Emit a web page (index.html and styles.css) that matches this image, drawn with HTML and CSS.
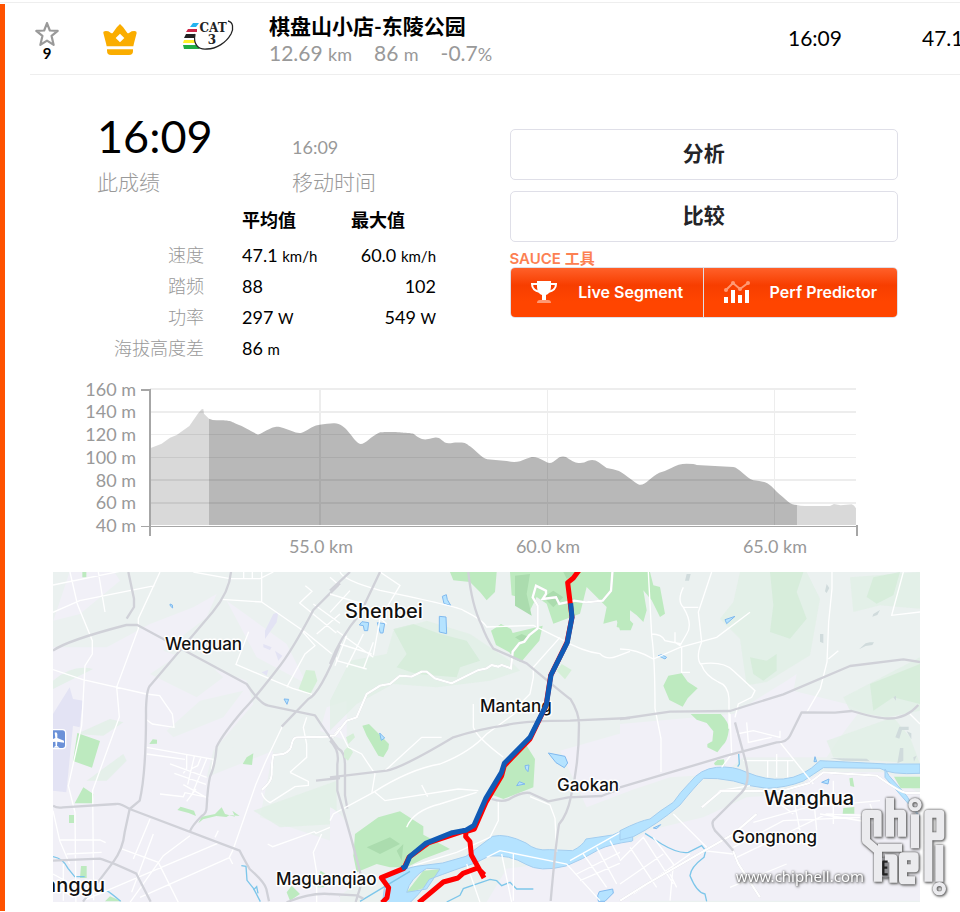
FILE: index.html
```html
<!DOCTYPE html>
<html lang="zh-CN">
<head>
    <meta charset="UTF-8">
    <meta name="viewport" content="width=device-width, initial-scale=1.0">
    <title>棋盘山小店-东陵公园</title>
    <link rel="stylesheet" href="styles.css">
</head>
<body>
    <main class="page">
        <section class="segment">
            <header class="row">
                <div class="star">
                    <svg width="24" height="24" viewBox="1 1 22 22" fill="none" stroke="#999" stroke-width="2" stroke-linejoin="round"><path d="M12 2l2.600 6.800 7.200.4-5.600 4.600 1.900 8.200L12 18l-6.100 4 1.900-8.200L2.200 9.200l7.200-.4z"/></svg>
                    <span>9</span>
                </div>
                <svg class="crown" width="34" height="31" viewBox="0 0 102 93" fill="#faad00">
                    <path fill-rule="evenodd" d="M51 0l9 9 13 18q2 2 5 0l8-5q16-4 15 5l-8 31-2 9H11l-2-9L1 27q-1-8 15-5l8 5q3 2 5 0L42 9zM51 29L38 42l13 13 13-13z"/>
                    <path d="M12 76h78v4q0 13-12 13H24Q12 93 12 80z"/>
                </svg>
                <svg class="cat" width="52" height="32" viewBox="0 0 52 32">
                    <path fill="#25b4ef" d="M11 4h6l-3 4H8z"/>
                    <path fill="#cc2748" d="M6 10h9v3H4z"/>
                    <path fill="#222" d="M4 15h11l-1 4H2z"/>
                    <path fill="#fff02a" d="M2 21h11v3H1z"/>
                    <path fill="#20ac43" d="M1 26h13l4 4H2z"/>
                    <path fill="#fff" stroke="#222" stroke-width="1.300" d="M46 2c5 1 6 7 3 13-5 9-15 15-24 15-9 1-14-5-12-15"/>
                    <text class="cat-text" x="31" y="13">CAT</text>
                    <text class="cat-text" x="30" y="25">3</text>
                </svg>
                <div class="title">
                    <h1>棋盘山小店-东陵公园</h1>
                    <p><span>12.69 <small>km</small></span><span>86 <small>m</small></span><span>-0.7<small>%</small></span></p>
                </div>
                <div class="num">16:09</div>
                <div class="num">47.1</div>
            </header>

            <div class="detail">
                <div class="stats">
                    <div class="times">
                        <div><strong>16:09</strong><span>此成绩</span></div>
                        <div><b>16:09</b><span>移动时间</span></div>
                    </div>
                    <table>
                        <thead>
                            <tr><td></td><th scope="col">平均值</th><th scope="col">最大值</th></tr>
                        </thead>
                        <tbody>
                            <tr><th scope="row">速度</th><td>47.1 <small>km/h</small></td><td>60.0 <small>km/h</small></td></tr>
                            <tr><th scope="row">踏频</th><td>88</td><td>102</td></tr>
                            <tr><th scope="row">功率</th><td>297 <small>W</small></td><td>549 <small>W</small></td></tr>
                            <tr><th scope="row">海拔高度差</th><td>86 <small>m</small></td><td></td></tr>
                        </tbody>
                    </table>
                </div>
                <div class="actions">
                    <button class="btn" type="button">分析</button>
                    <button class="btn" type="button">比较</button>
                    <div class="sauce">SAUCE 工具</div>
                    <div class="group">
                        <button type="button">
                            <svg width="26" height="22" viewBox="0 0 26 22" fill="none">
                                <path fill="#fff" d="M6 0h14v5c0 5-2 8-5 9v5h-4v-5c-3-1-5-4-5-9z"/>
                                <path stroke="#fff" stroke-width="2" d="M7 3H1c0 4 3 7 8 8M19 3h6c0 4-3 7-8 8"/>
                                <path fill="#ff9973" d="M6 22c0-2 1-3 3-3h8c2 0 3 1 3 3z"/>
                            </svg>
                            <span>Live Segment</span>
                        </button>
                        <button type="button">
                            <svg width="26" height="22" viewBox="0 0 26 22">
                                <path fill="none" stroke="#ff9973" stroke-width="2" d="M2 9l7-7 7 6 8-6"/>
                                <g fill="#ff9973"><circle cx="2" cy="9" r="2"/><circle cx="9" cy="2" r="2"/><circle cx="16" cy="8" r="2"/><circle cx="24" cy="2" r="2"/></g>
                                <path fill="#fff" d="M0 16h4v6H0zM7 9h4v13H7zM14 14h4v8h-4zM21 9h4v13h-4z"/>
                            </svg>
                            <span>Perf Predictor</span>
                        </button>
                    </div>
                </div>
            </div>

            <svg class="chart" viewBox="0 0 790 190">
                <g stroke="#ededed" stroke-width="2">
                    <path d="M80 20h706M80 43h706M80 111h706M80 134h706M250 20v136"/>
                    <path stroke-width="1" d="M80 65.500h706M80 88.500h706M477.500 20v136M704.500 20v136"/>
                </g>
                <g transform="scale(.33333)" fill="#000">
                    <path fill-opacity=".15" d="M240 468V238L275 224 300 206 320 198 358 171 385 132 395 121 400 120 402 134 417 149V468z"/>
                    <path fill-opacity=".28" d="M417 468V149Q428 154 440 154C485 154 480 157 500 165S530 178 550 190 565 196 590 184 620 171 640 177 680 195 695 191 725 171 745 168 780 164 790 163C825 159 845 208 866 223 880 233 900 203 927 191 935 188 990 189 1000 191 1040 192 1030 196 1045 205S1070 212 1085 208 1105 205 1115 213 1130 226 1150 221C1190 219 1185 222 1200 232S1235 268 1252 271L1310 276Q1330 281 1350 277 1370 268 1385 264 1400 262 1425 277 1438 286 1450 278L1468 265Q1478 260 1488 264 1510 280 1525 282 1540 284 1554 275 1573 270 1585 279L1610 297Q1630 300 1647 306C1670 318 1697 345 1708 347 1724 351 1745 322 1768 311Q1785 307 1804 297 1825 284 1850 284T1880 288L1990 294C2005 295 2030 328 2050 334Q2080 337 2092 343C2110 354 2120 371 2135 381 2155 398 2160 407 2181 408V468z"/>
                    <path fill-opacity=".15" d="M2181 468V408Q2190 411 2205 411L2280 411 2292 405 2312 409 2345 406Q2352 407 2358 418V468z"/>
                </g>
                <g fill="none" stroke="#a6a6a6">
                    <path stroke-width="2" d="M71 21h9v146M786 157h1v10"/>
                    <path d="M71 157.500h716"/>
                </g>
                <g class="y-axis">
                    <text x="66" y="27">160 m</text>
                    <text x="66" y="49">140 m</text>
                    <text x="66" y="72">120 m</text>
                    <text x="66" y="95">100 m</text>
                    <text x="66" y="118">80 m</text>
                    <text x="66" y="140">60 m</text>
                    <text x="66" y="163">40 m</text>
                </g>
                <g class="x-axis">
                    <text x="251" y="184">55.0 km</text>
                    <text x="478" y="184">60.0 km</text>
                    <text x="705" y="184">65.0 km</text>
                </g>
            </svg>

            <div class="map">
                <svg class="tiles" viewBox="0 0 867 330">
                    <rect width="867" height="330" fill="#ebf1f0"/>
                    <!-- west -->
                    <g transform="translate(-13 -8) scale(.33333)">
                        <path class="town" d="M39 250L200 250 330 180 460 130 530 90 500 160 370 260 620 350 640 420 520 560 500 640 700 560 660 760 900 840V1020H39z"/>
                        <path class="town" d="M90 20h130l20 30-120 100-80 20zM560 110l180 130 60 120-150-80zM860 430l60-20v120l-80-30z"/>
                        <path class="hill" d="M39 350q60-50 120-35l-120 60zM110 510l100-45 40 10-60 40zM140 650l110-80 10 20-60 60zM640 740l250-90v130L720 790z"/>
                        <path fill="#ebf1f0" d="M380 500l100-90 130-30-60 80-150 60zM540 540l130-130 100 60-160 90zM330 330l120-80 100 90-80 60z"/>
                        <path class="field" d="M39 450l50-80 10 35 30 5-10 80-20-5-20 200-40-5zM700 150l15-5-5 30-35 50V200zM670 240l25 10-5 8-20-8zM705 260l22 15-12 15zM665 325l20-8-5 18z"/>
                        <path class="wood" d="M112 507l68 24-24 80-57-20zM130 670l30 20-2 28h-54zM87 753h15v24H87zM123 906h17v36h-20zM328 540l10-14 13 1v12zM608 600l12-20 20-12-4 35zM412 738l10-10 40 12 6 16-22-9zM475 778l10-20 40-8 20-20 10 20 30 8-8-18 22 16-30-3-10 6-30-3-40 10zM127 20h12v20h-12zM195 1012l15-15 35 15zM740 985l15-20 25 25-30 20zM832 945l10-25 15 10-5 40h-20z"/>
                        <path class="wood pale" d="M776 375l22-57 26 2 8 30-22 42z"/>
                        <path class="water" d="M390 120l7 3 1 9-7-6zM732 405l14 1-5 15z"/>
                        <path class="stream" stroke-width="6" d="M39 878q30 5 45 35l20 25h30M200 980q10 5 42 32M604 905l14 2 3 42 20 25 20 39M640 978l10-10 4 20"/>
                        <path class="street" d="M39 63l230-47M90 24l22 96 45 110v40l-22 35-10 180-40 180 20 80 3 300M39 145l80-35 225-45M175 24l20 120M360 24l-65 140v30l-65 175 8 90-80 220 3 330M39 317l90 30 190 43 40 5 38 55 5 40-65-10-20-15M460 24l110 20h90l40-20M665 24v90l-120-8M611 24v20M637 24v20M665 114l130 90 80 65M870 40l30 26M796 65l20 17-37 35 110 90M785 200l40 45-30 25-55 100M626 203l-38 98 105 45 65 27 58 18M900 150l-70 60M820 120l80 58M890 280v12M320 550l200 36-5 30M320 570l115 16M440 573v40l-10 15M463 577l-20 85M483 580l-10 25-20 10M500 584l-45 110M390 600l110 40M403 628l95 33M430 662l75 42M360 690l70 8 5-12 70 15M468 675l-28 37M800 460l-10 30 10 50v40l-50 45M750 625l55 27v12l-40 4-75 48q-20-10-25-30M728 485l-50 105-30 70-70 200-10 20 10 20M683 840l15 8 125-45 5 5 70-30M845 810l-25 55 10 60v90M60 828h120l17 8M80 870l105-5M525 820l10-20M130 1010l410-175M300 1000l270-120M340 810l-65 175M330 765l-50 120M450 815l-80 60-100 140M245 855l110 40 60 120M39 930l110 60M39 960l60 40M70 900v110M39 740l20 90 30 70"/>
                        <path class="river-road" d="M900 490l-20 28-110 2q-10 0-15 20 0 20-25 30l-30 3q-5 20-5 60 0 20-30 45"/>
                        <path class="road" d="M265 24l17 80v25l-22 35M39 260q40-30 220-77h33l328 177q40 60 65 65l140 29q40 60 70 100 20 10 20 50v90l7 40M573 24q-5 60-55 120L330 365q-10 10-12 70 1 190-19 275l-30 25-15 70q-5 50-35 90l-90 118M900 58l-80 80q-65 125-110 180-70 90-100 120-60 70-80 110-5 60-20 90-7 30-10 90 0 20-15 28-30 30-36 48M39 725q10 8 30 5l160-10q10-3 40 15l330 125q10 20 30 55 45 40 50 60l8 37M39 890l140-6q30 8 110 45l43 84M900 240q-60 150-95 165l-80 83M828 650l72-8M740 1015q90-38 160-20"/>
                        <rect x="19" y="497" width="58" height="57" rx="10" fill="#6b91d8" stroke="#fff" stroke-width="4"/>
                        <path fill="#fff" d="M44 506q6-4 8 4v12l20 8v6l-20-3-1 12 8 6H39l8-6-1-12-20 3v-6l20-8z"/>
                    </g>
                    <!-- centre -->
                    <g transform="translate(277 -8) scale(.33333)">
                        <path class="town" d="M0 730q50 20 80 120l20 90-100 80zM470 1014l60-100 160-20 210-90v210zM690 560l210-60v180l-130 50z"/>
                        <path class="hill" d="M190 200l100-30 130 40 120 80 30 30-90 30-160 20-130-10-110 60-80 80v-90l60-120 110-20z"/>
                        <path class="hill strong" d="M190 195l60-15 80 30 80 20 40 60-60 20-10 30-120-10-60-20 30-40z"/>
                        <path class="wood" d="M360 24h140l-5 60-25 25-20-25-30-30-50-5zM540 24h290l70 60v105l-30 10-10-30-40 10 10-50-60-60-20 80-80 30-20-60-30-20-25 50-30-50-20-5zM483 200l30-20 30 15 5 12 90-22-10 45-30 35-25 30-20-10-15-20-40-22zM830 24h70v150l-20 20-20-5 5-35-20-20-35-60 10-20zM97 485l20-5 60 60-2 15-15 25-15-5-35-60zM590 545l25 40-5 85-90 35-40-15 40-90 70-65zM75 810l70-50 65-18 70 45v25l80 43-80 30-50 25h-50l-40-10-60 25-10-50zM230 985l50-65 55-5-45 55-60 18z"/>
                        <path fill="#abdcae" d="M555 35l45-5-10 60 15 65-50-30zM640 100l30-20 30 20-30 30zM700 24h50l-40 20zM110 850l70-30 30 20-60 30zM200 860l20-20-5 50zM555 220l20-10 20 8-20 15z"/>
                        <path class="wood pale" d="M680 320l15-20 30 18-20 28zM48 520l22-12 5 12-20 20zM42 560l15-15 12 20-15 25-12-10z"/>
                        <path class="water" d="M88 183l8-10 20 3-3 24h-10l-3-15zM142 176l22 3-5 28h-8zM337 97l12-5 3 15 10 17-20-5zM328 157l20 2 2 50-22-5zM149 507l15 15-10 7zM655 567l50 10 8 20-10 14-25-15zM585 605l12-2-3 20-7-8zM560 665l8-12 17 7zM803 995l5-12 40-8 2 12-25 25h-20z"/>
                        <path class="river" d="M158 1014l10-85 90-22 80-10 70-20 80-60q40-10 100 20 30 25 70 20l70 3q30-15 40-35l80-12 60-27v45q-70 10-100 25-50 30-100 50-80 20-120-5-50-30-110-25l-40 20q-60 20-140 50-30 50-80 88zM230 985l60-10 40-60-40-2q-50 30-60 72z" fill-rule="evenodd"/>
                        <path class="stream" d="M90 1012l150-90M350 1014l40-20 10-20 80-28 20 4 15 15 25-10 20 20h50"/>
                        <path class="street" d="M30 24q10 25 120 55 240 50 250 60 60 30 70 50l140-5 80 40q70 40 120 45 20 20 50 8l40-15M150 24l60 40-60 100-20 110M0 145l60-65M0 90l100 30 70 60M20 200l110 80M30 240l95 30M20 290l90 25M50 215l-35 90M100 210l-50 100M130 235l-30 80M0 770l10-20 120-65q110-70 200-85 90-35 140-90l110-80M430 420v70q10 30 90 90M690 220l-80 90v30l-10 50-60 60M135 685l30 25 220-35 60 5M275 663l18 35M30 500l25 50 40 20 40 60-10 60M230 790q20-50 100-70l110-35M505 710v60l-25 50-100 45-130 40M165 620l110-100h60M600 698l60 25 15 40 5 100M550 870v140M470 880l40-20 200 40 100 110M410 900l40 115M515 870l30 145M720 890l160-90M740 930l160-80M750 950l160-70M760 870l70 100M800 850l60 110M840 830l60 110"/>
                        <path class="river-road" d="M0 515h15l35-45 30-10 30-70 40-25 30-5 30-25 35 3 30-15h15l25 20 50 15 80-40 25-5 15-10 20 5 10-5 28 10 5-50 20-25 15-5 15-20 25-20V125l-15-25 10-35 10 5 20 10v10l-10 15 40-5 10 20 45-10 35 5 50-5 25-30 5-65"/>
                        <path class="road" d="M150 24L90 150Q30 220 0 300M60 24L0 80M415 24q10 100 40 160 15 40 35 70l100 44q120 100 132 108 25 40 25 75 0 120-25 220-10 50-35 80-10 60-25 230M0 640l170-20q50-10 200-100 80-25 150-35 60-15 200-15l180-8M485 705q30 10 50 2 40-25 65-20l55 25 60-12 100-4 85-33M0 530q30 30 22 70v80q45 150 75 270l-20 64M0 990l80 4 20 10"/>
                    </g>
                    <!-- east -->
                    <g transform="translate(567 -8) scale(.33333)">
                        <path class="town" d="M0 480l340-30 160-100 30-20-10 50 160 40 40 20-60 80-40 60H370l-60 50-160 10L0 690zM0 860l80-60 170-40 130-60 120-10 100-65h200l100 65v320H0z"/>
                        <path class="hill" d="M360 24h200l40 80-30 170-130 80-60 10-20-140-60-60 40-50zM690 40l210-16v110l-120-10-80 20zM670 400l230-120v160l-100 20-110-20zM620 530l200-70 50 60 30 80-260-20z"/>
                        <path class="hill strong" d="M450 24h100l-20 60 30 80-50 60-60-20 10-80zM760 40l80-16-20 70-50 25-30-20zM750 360l150-60v120l-80-20-60 40zM390 280l50 10 30-20v50l-40 30-30-20z"/>
                        <path class="wood" d="M0 24h90l10 40 20 5 15 80-15 10-25-50-25-30 10 60-10 35-20-20-20-15-15 15 25 25-8 20H0zM130 365l15-30 40-7 18 25 30 20-30 30-15 25-40-20zM212 450h90q25 25 25 45-5 40-20 50l-15 20-30-15v-10l15-8 3-30-20-25-30-10zM282 598l10-10 20-2 3 18h-30zM822 638h80v35h-60zM688 643l10-2 5 28-12-3zM670 732l33-3v20h-35z"/>
                        <path fill="#d0dbdc" d="M200 30h12l-5 20h-12zM620 60l8 12-8 15-5-5zM750 235h12l-5 8-20 3-20 10 20-18zM760 150l20-12-8 15-15 5zM820 400l8-5v15zM826 520l12-32h28v10h-20l-8 26zM860 502l14 6v18l-8-14zM840 552h10v38l-18 8zM880 580l10-5-8 18zM630 582l110 2 10 8-80-2zM600 210h10v28l-10-5z"/>
                        <path class="water" d="M315 167l30-10-25 22zM115 275l10-3 15 8-5 5zM605 655l22-10-3 15zM585 578l5 15h-8zM100 792l22-10-12 12z"/>
                        <path class="river" d="M0 800q60-30 90-35 30-25 70-50 20-30 50-60 30-40 80-45 50-5 90 15 60 25 110 20 60-5 110-55l200 10h100v28q-90 5-120-15l-170-2q-30 20-60 40-50 20-110 22-50-5-100-22-50-10-90-8-30 30-70 80-70 60-140 95L0 828z"/>
                        <path class="river" d="M795 615l12 20 53 60 40 65-30-35-75-85z"/>
                        <path class="stream" stroke-width="6" d="M75 808l50 32q50 30 80 25l40-20 12 15-5 20q-40 30-42 55 20 50 45 55l5 22M356 570l2 30-5 8"/>
                        <path class="street" d="M85 24l10 190q10 70 10 220l18 90v100M275 24l-40 120 10 90q-20 50 0 70 10 30 50 50 30 10 32 50v90M190 70q-20 40 0 60 30 50 10 80l-20 35-15-10v-30M0 255q50 0 100 30l80-35 110-30 100-75M190 130h45M95 210q30 0 40 20l50 10M185 250v75h25M240 300q70-10 100 20l65 60-10 20-40 20-10 40M636 24v50l-10 100-5 120-20 80-40 70M625 285l30-25M850 24l-35 130 85-10M330 450l5 120-30 40M350 510l50-10 80 20v-20M380 475l5 60 70-15M480 535l40 50 60 75M370 590h150M443 590v50M470 570v70M503 590v50M250 730l50-50 90-15M160 750l100 100M0 890l70-70 90 140M30 850l80 120M0 960l130-90M40 990l170-120M100 820l60 80-10 110M400 775l160-45 220-20M350 880l270-130 140 5M520 700l20 100M580 690l10 110M640 650v130M340 850l150-80 230-10M250 860l90 10M870 450l30 30M750 720l30 80M440 690l80 60M600 750l180 30M150 930l20 40M330 970l170-70"/>
                        <path class="river-road" d="M0 1010L80 960 340 810 410 750M570 655l40-30 160 10q70 50 90 52h40M300 680l180 2 90-25M335 850l20 50 65 100M245 730l60-50"/>
                        <path class="road" d="M0 465l150-22 180-2 160-50 200-85 160-20 50 8M0 670l320-95 150-40q30 0 40-20l35-70 100 1 50-5q70 20 100 22 60 5 100-40M345 475l30 110q20 70-10 100l-80 80q-15 10 0 35 30 30 55 60"/>
                    </g>
                    <g class="places">
                        <text x="112" y="78">Wenguan</text>
                        <text x="427" y="140">Mantang</text>
                        <text x="504" y="219">Gaokan</text>
                        <text x="679" y="271">Gongnong</text>
                        <text x="223" y="313">Maguanqiao</text>
                        <text class="city" x="292" y="46">Shenbei</text>
                        <text class="city" x="711" y="233">Wanghua</text>
                        <text class="city end" x="52" y="320">Tanggu</text>
                    </g>
                    <g class="route" transform="translate(277 -8) scale(.33333)">
                        <path stroke="#f00" d="M750 15l-20 27-17 14 8 64 5 40-15 75-49 100-14 90-48 100-77 80-8 30-47 80-35 80-25 8-1 15 13 15 4 40 25 45 13 24M463 932l-20-20-44 16-15 14-44 12-74 62M405 800l-110 37-58 43-15 33-68 28 22 30-5 30-15 15"/>
                        <path stroke="#105ab5" d="M722 118l4 42-14 75-49 98-14 90-49 97-77 78-9 28-47 78-35 80-25 15-40 7-80 32-48 40-13 30-11 5"/>
                    </g>
                </svg>
                <div class="mark">
                    <span>www.chiphell.com</span>
                    <svg width="88" height="104" viewBox="720 692 264 312" fill="none" stroke="#ebebee" stroke-width="24" stroke-linejoin="round">
                        <circle cx="797" cy="910" r="31" fill="#8c8c90" stroke="none"/>
                        <path d="M773 817v-68h-35v80l37 32M810 700v117M810 748h36v69M885 750v102M774 952V850M774 850h72M795 882h25v73M925 952V748h36v68h-28M885 948h-36v-72h35v36h-28M958 842v110"/>
                        <circle cx="885" cy="721" r="14" stroke-width="12"/>
                        <circle cx="958" cy="973" r="14" stroke-width="12"/>
                        <path stroke="#222" stroke-width="7" d="M803 892h-13v38h13M790 910h12"/>
                    </svg>
                </div>
            </div>
        </section>
    </main>
</body>
</html>
```

FILE: styles.css
```css
* {
    box-sizing: border-box;
    margin: 0;
    padding: 0;
}

body {
    font-family: Lato, "Noto Sans CJK SC", sans-serif;
    background: #fff;
    color: #000;
    overflow-x: hidden;
}

button {
    cursor: pointer;
    font-family: Inter, "Noto Sans CJK SC", sans-serif;
}

.page {
    margin-top: 2px;
    padding-top: 1px;
    border-top: 1px solid #eee;
}

.segment {
    border-left: 5px solid #ff5200;
    padding-bottom: 9px;
}

.row {
    display: grid;
    grid-template-columns: 34px 112px 64px 1fr 134px 38px;
    align-items: center;
    justify-items: center;
    height: 71px;
    margin-left: 25px;
    border-bottom: 1px solid #eee;
}

.star {
    display: flex;
    flex-direction: column;
    align-items: center;
    padding-top: 4px;
    font-size: 15px;
    font-weight: bold;
    line-height: 15px;
}

.cat {
    align-self: start;
    margin-top: 15px;
}

.cat-text {
    font-family: "DejaVu Serif", serif;
    font-size: 12px;
    font-weight: bold;
    text-anchor: middle;
    fill: #222;
}

.title {
    justify-self: start;
    padding-left: 29px;
}

.title h1 {
    font-size: 21px;
    line-height: 28px;
    white-space: nowrap;
}

.title p {
    display: flex;
    gap: 22px;
    font-size: 21px;
    line-height: 26px;
    color: #999;
}

.title small {
    font-size: 18px;
}

.num {
    justify-self: start;
    padding-bottom: 4px;
    font-size: 21px;
    white-space: nowrap;
}

.detail {
    display: grid;
    grid-template-columns: 103fr 97fr;
    padding: 36px 62px 0 92px;
}

.times {
    display: flex;
    align-items: flex-end;
}

.times div {
    display: flex;
    flex-direction: column;
    flex: 0 0 195px;
}

.times strong {
    font-size: 45px;
    font-weight: normal;
    line-height: 50px;
}

.times b {
    font-size: 18px;
    font-weight: normal;
    line-height: 28px;
    color: #999;
}

.times span {
    font-size: 21px;
    font-weight: 300;
    line-height: 42px;
    color: #999;
}

table {
    width: 339px;
    border-collapse: collapse;
    font-size: 18px;
    line-height: 24px;
}

table small {
    font-size: 15px;
    line-height: 15px;
}

tr {
    height: 31px;
}

thead tr {
    height: 36px;
    vertical-align: top;
}

thead th {
    padding-top: 5px;
    text-align: left;
}

thead td {
    width: 145px;
}

tbody th {
    padding-right: 38px;
    font-weight: 300;
    text-align: right;
    color: #999;
}

tbody td:last-child {
    width: 85px;
    text-align: right;
}

.actions {
    padding-top: 18px;
}

.btn {
    display: block;
    width: 100%;
    height: 51px;
    margin-bottom: 11px;
    padding-bottom: 6px;
    border: 1px solid #dfdfe8;
    border-radius: 5px;
    background: #fff;
    color: #242428;
    font-size: 21px;
    font-weight: bold;
}

.sauce {
    margin-top: -3px;
    font-family: Inter, "Noto Sans CJK SC", sans-serif;
    font-size: 15px;
    font-weight: 600;
    line-height: 17px;
    color: #fc8052;
}

.group {
    display: flex;
    border: 1px solid #dfdfe8;
    border-radius: 5px;
    overflow: hidden;
}

.group button {
    display: flex;
    flex: 1;
    align-items: center;
    height: 49px;
    padding: 0 20px 2px;
    border: 0;
    background: linear-gradient(#ff6029, #f73e00 35%, #ff4500 70%);
    color: #fff;
    font-size: 16px;
    font-weight: 600;
    white-space: nowrap;
}

.group button + button {
    border-left: 1px solid #dfdfe8;
}

.group span {
    flex: 1;
    text-align: right;
}

.chart {
    display: block;
    width: calc(100% - 165px);
    margin: 6px 100px 0 65px;
    font-size: 18px;
    fill: #999;
}

.y-axis {
    text-anchor: end;
}

.x-axis {
    text-anchor: middle;
}

.map {
    position: relative;
    margin: 13px 40px 0 48px;
}

.tiles {
    display: block;
    width: 100%;
    overflow: hidden;
}

.town {
    fill: #f1f0f7;
}

.hill {
    fill: #e0efe4;
    opacity: 0.7;
}

.strong {
    fill: #d2ebd5;
}

.field {
    fill: #e3e3f4;
}

.wood {
    fill: #bdeabf;
}

.pale {
    fill: #d5efd7;
}

.water {
    fill: #b5e3ff;
    stroke: #7fb9ee;
    stroke-width: 3;
}

.river {
    fill: #b5e3ff;
    stroke: #a3cdef;
    stroke-width: 3;
}

.stream {
    fill: none;
    stroke: #7dc6ea;
    stroke-width: 4;
}

.street {
    fill: none;
    stroke: #fff;
    stroke-width: 4;
}

.river-road {
    fill: none;
    stroke: #fff;
    stroke-width: 7;
    filter: drop-shadow(0 0 2px #c9c9d2);
}

.road {
    fill: none;
    stroke: #d0d1d8;
    stroke-width: 7;
    stroke-linejoin: round;
}

.places {
    font-family: Inter, "Liberation Sans", sans-serif;
    font-size: 17px;
    font-weight: 500;
    fill: #111;
    stroke: #fff;
    stroke-width: 3px;
    stroke-linejoin: round;
    paint-order: stroke;
}

.city {
    font-size: 20px;
}

.end {
    text-anchor: end;
}

.route {
    fill: none;
    stroke-width: 15;
    stroke-linejoin: round;
}

.mark {
    position: absolute;
    right: -28px;
    bottom: 3px;
    display: flex;
    align-items: flex-end;
    filter: drop-shadow(0 0 1px #555) drop-shadow(1px 1px 1px #777);
}

.mark span {
    margin-right: -4px;
    padding-bottom: 12px;
    font-family: "Noto Sans", sans-serif;
    font-size: 15px;
    line-height: 22px;
    color: #fff;
}
```
